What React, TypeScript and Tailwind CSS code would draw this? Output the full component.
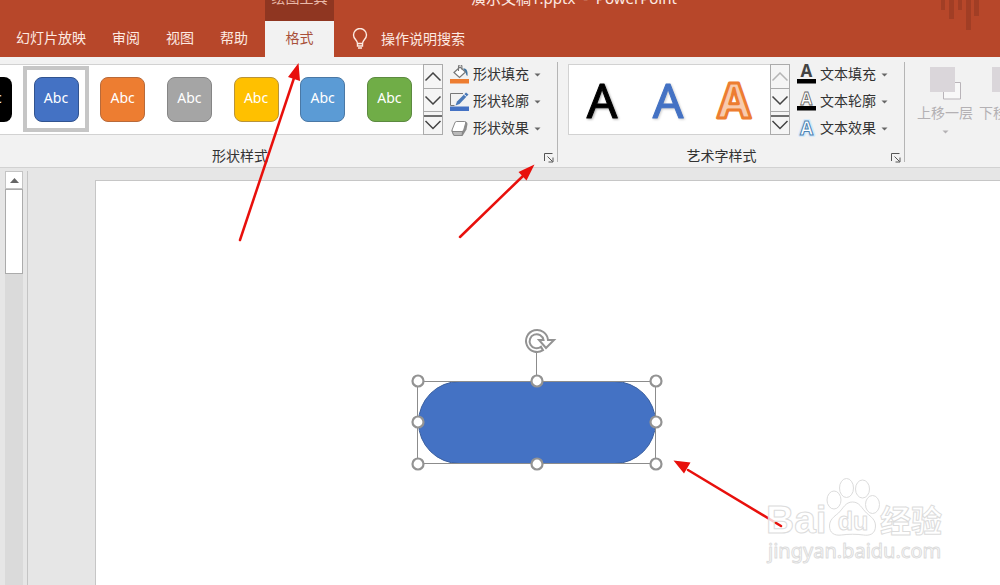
import type { ReactNode } from 'react';
import clsx from 'clsx';

const tabs = ['幻灯片放映', '审阅', '视图', '帮助'];

const shapeStyles = [
  { name: '蓝色', className: 'bg-[#4472c4] border-[#31538f]', selected: true },
  { name: '橙色', className: 'bg-[#ed7d31] border-[#b86a3a]' },
  { name: '灰色', className: 'bg-[#a5a5a5] border-[#858585]' },
  { name: '金色', className: 'bg-[#ffc000] border-[#b8933a]' },
  { name: '浅蓝', className: 'bg-[#5b9bd5] border-[#4a78a5]' },
  { name: '绿色', className: 'bg-[#70ad47] border-[#5c8a40]' },
];

const wordArtStyles = [
  { name: '黑色', className: 'fill-black stroke-black drop-shadow-[1px_1px_1px_#aaa]', width: 1 },
  { name: '蓝色', className: 'fill-[#4472c4] stroke-[#4472c4] drop-shadow-[1px_1px_1px_#ccc]', width: 1 },
  { name: '橙色', className: 'fill-[#f8cbad] stroke-[#ed7d31] font-bold', width: 3 },
];

const handles = [
  [13, 61],
  [132, 61],
  [251, 61],
  [13, 102],
  [251, 102],
  [13, 144],
  [132, 144],
  [251, 144],
];

function Caret({ className }: { className?: string }) {
  return (
    <svg viewBox="0 0 7 4" className={clsx('h-1 w-[7px] shrink-0', className)}>
      <path d="M0.5 0.5h6l-3 3z" fill="currentColor" />
    </svg>
  );
}

function MenuButton({ label, icon }: { label: string; icon: ReactNode }) {
  return (
    <button type="button" className="flex h-[27px] items-center">
      {icon}
      <span className="ml-1 whitespace-nowrap pb-px">{label}</span>
      <Caret className="ml-[5px] mt-px text-[#666]" />
    </button>
  );
}

function GalleryScroller({ upDisabled = false }: { upDisabled?: boolean }) {
  return (
    <div className="flex w-5 flex-col border border-[#ababab] bg-[#f5f5f5] text-[#444]">
      <button
        type="button"
        aria-label="上一行"
        className={clsx(
          'flex h-6 items-center justify-center border-b border-[#ababab]',
          upDisabled && 'text-[#b5b5b5]'
        )}
      >
        <svg viewBox="0 0 18 10" className="h-[10px] w-[18px]">
          <path d="M1.5 8.5L9 1l7.5 7.5" fill="none" stroke="currentColor" strokeWidth="1.5" />
        </svg>
      </button>
      <button
        type="button"
        aria-label="下一行"
        className="flex h-[23px] items-center justify-center border-b border-[#ababab]"
      >
        <svg viewBox="0 0 18 10" className="h-[10px] w-[18px]">
          <path d="M1.5 1.5L9 9l7.5-7.5" fill="none" stroke="currentColor" strokeWidth="1.5" />
        </svg>
      </button>
      <button type="button" aria-label="其他" className="flex flex-1 items-center justify-center">
        <svg viewBox="0 0 18 20" className="h-5 w-[18px]">
          <path d="M0 3h18M1.5 8L9 15.5 16.5 8" fill="none" stroke="currentColor" strokeWidth="1.5" />
        </svg>
      </button>
    </div>
  );
}

function Launcher({ label }: { label: string }) {
  return (
    <button type="button" aria-label={label} className="flex w-5 items-center pl-[6px] pt-[5px]">
      <svg viewBox="0 0 10 10" className="size-[10px]" fill="none" stroke="#555">
        <path d="M0.5 8V0.5H8.5M3.5 3.5l5 5M9 4.5V9H4.5" />
      </svg>
    </button>
  );
}

function FillIcon() {
  return (
    <svg viewBox="0 0 19 20" className="h-5 w-[19px] shrink-0">
      <path d="M4 7.5L10 2l5.5 5-6 5.5z" fill="#fff" stroke="#777" strokeWidth="1.2" />
      <path d="M8.5 6V1.5a1.7 1.7 0 0 1 3.4 0v3" fill="none" stroke="#777" strokeWidth="1.1" />
      <path d="M13 3.5c3.5-.5 5 2 4.5 7.5-1.8-.6-1.5-3-2-4.2z" fill="#44759f" />
      <rect y="14" width="19" height="4.5" fill="#ed7d31" />
    </svg>
  );
}

function OutlineIcon() {
  return (
    <svg viewBox="0 0 19 20" className="h-5 w-[19px] shrink-0">
      <path d="M13 1.5H0.5v12H4.5" fill="none" stroke="#777" />
      <path d="M16 .5l2.5 2L9.5 12l-4 1.5L7 9.5z" fill="#4a79b8" />
      <path d="M14 2.5l2.5 2" stroke="#fff" />
      <rect y="14.5" width="19" height="4.5" fill="#4472c4" />
    </svg>
  );
}

function EffectIcon() {
  return (
    <svg viewBox="0 0 19 20" className="h-5 w-[19px] shrink-0">
      <path d="M6 2.5h9.5q2 .5 2 2.5l-1 5.5-4 6.500H5q-1.500 0-2-1l-1.500-4z" fill="#8b8b8b" />
      <path d="M6.5 2.5h8q1.500 0 1.200 1.500l-2 7q-.5 1.500-1.700 1.500H3Q1.500 12.500 2 11L4.800 4q.5-1.500 1.700-1.500z" fill="#fff" stroke="#8a8a8a" />
      <path d="M2 12l1.5 3.5q.5 1 1.5 1h7l.5-4H3z" fill="#b9b9b9" stroke="#777" strokeWidth=".6" />
    </svg>
  );
}

function LetterIcon({ kind }: { kind: 'fill' | 'outline' | 'effect' }) {
  return (
    <svg viewBox="0 0 19 20" className="h-5 w-[19px] shrink-0 overflow-visible font-bold">
      {kind === 'fill' && (
        <text x="9.5" y="12" textAnchor="middle" fontSize="17" fill="#444">A</text>
      )}
      {kind === 'outline' && (
        <text x="9.5" y="13" textAnchor="middle" fontSize="17" fill="#fff" stroke="#666" strokeWidth=".8">A</text>
      )}
      {kind === 'effect' && (
        <>
          <text x="9.5" y="16" textAnchor="middle" fontSize="19" fill="#d4e9fa" stroke="#d4e9fa" strokeWidth="4" strokeLinejoin="round">A</text>
          <text x="9.5" y="16" textAnchor="middle" fontSize="19" fill="#fff" stroke="#4d83b3">A</text>
        </>
      )}
      {kind !== 'effect' && <rect y="14" width="19" height="4.5" fill="#000" />}
    </svg>
  );
}

function ArrangeButton({ label }: { label: string }) {
  return (
    <button type="button" disabled className="flex w-[62px] shrink-0 flex-col items-center text-[#b4b1b4]">
      <svg viewBox="0 0 31 33" className="h-[33px] w-[31px]">
        <path d="M13.5 15.5h17v16.5h-17z" fill="#f8f8f8" stroke="#b9b4b9" />
        <rect width="25" height="25" fill="#dad6da" />
      </svg>
      <span className="mt-[3px] whitespace-nowrap leading-5">{label}</span>
      <Caret className="mt-[7px]" />
    </button>
  );
}

function Header() {
  return (
    <header className="relative shrink-0 bg-[#b7472a] text-[#fdeae2]">
      <div className="flex h-[21px] overflow-hidden">
        <div className="w-[265px] shrink-0" />
        <div className="w-[69px] shrink-0 bg-[#8f3621] text-center text-[#e9b9a9]">
          <div className="-mt-3 leading-5">绘图工具</div>
        </div>
        <h1 className="-mt-3 ml-[137px] whitespace-pre text-[15px] leading-5">演示文稿1.pptx  -  PowerPoint</h1>
      </div>
      <nav className="flex h-9 items-stretch pl-[3px]">
        {tabs.map((tab) => (
          <button key={tab} type="button" className="shrink-0 px-[13px] pb-[2px]">
            {tab}
          </button>
        ))}
        <button
          type="button"
          aria-current="page"
          className="ml-1 w-[69px] shrink-0 bg-[#f2f2f2] pb-[2px] text-[#a9513a]"
        >
          格式
        </button>
        <button type="button" className="flex items-center pl-[18px]">
          <svg viewBox="0 0 16 22" className="h-[22px] w-4" fill="none" stroke="currentColor" strokeWidth="1.4">
            <path d="M5.5 15.5c0-3.5-4-4-4-8.5a6.5 6.5 0 0 1 13 0c0 4.5-4 5-4 8.5z" />
            <path d="M5.5 15.5v2.5h5v-2.5M6 20h4" />
          </svg>
          <span className="ml-[13px] pb-px">操作说明搜索</span>
        </button>
      </nav>
      <svg viewBox="0 0 40 32" className="absolute right-5 top-0 h-8 w-10" fill="#a13e25">
        <rect x="1" width="4" height="10" />
        <rect x="9" width="5" height="19" />
        <rect x="18" width="4" height="10" />
        <rect x="26" width="5" height="30" />
        <rect x="34" width="5" height="16" />
      </svg>
    </header>
  );
}

function Ribbon() {
  return (
    <div className="flex h-[111px] shrink-0 overflow-hidden border-b border-[#d2d2d2] bg-[#f2f2f2] text-[#333]">
      <section className="flex w-[558px] shrink-0 flex-col">
        <div className="flex h-[87px] items-start pt-1">
          <div className="mt-[3px] flex h-[71px] w-[443px]">
            <div className="flex flex-1 items-center border-y border-[#d2d2d2] bg-white pb-px">
              <div className="flex w-[23px] justify-end overflow-hidden pr-[11px]">
                <button type="button" className="size-[45px] shrink-0 rounded-lg bg-black pb-[3px] text-white">
                  Abc
                </button>
              </div>
              {shapeStyles.map((style) => (
                <div key={style.name} className="flex flex-1">
                  <div
                    className={clsx(
                      'flex size-[66px] items-center justify-center border-4',
                      style.selected ? 'border-[#c6c6c6]' : 'border-transparent'
                    )}
                  >
                    <button
                      type="button"
                      title={style.name}
                      className={clsx('size-[45px] rounded-lg border pb-[3px] text-white', style.className)}
                    >
                      Abc
                    </button>
                  </div>
                </div>
              ))}
            </div>
            <GalleryScroller />
          </div>
          <div className="ml-[7px]">
            <MenuButton label="形状填充" icon={<FillIcon />} />
            <MenuButton label="形状轮廓" icon={<OutlineIcon />} />
            <MenuButton label="形状效果" icon={<EffectIcon />} />
          </div>
        </div>
        <div className="flex h-6 items-center">
          <h2 className="flex-1 pr-[58px] pt-px text-center">形状样式</h2>
          <Launcher label="设置形状格式" />
        </div>
      </section>

      <div className="-ml-px my-[5px] w-px shrink-0 bg-[#b5b5b5]" />

      <section className="flex w-[347px] shrink-0 flex-col">
        <div className="flex h-[87px] items-start pl-[10px] pt-1">
          <div className="mt-[3px] flex h-[71px] w-[222px]">
            <div className="flex flex-1 items-center justify-around border border-r-0 border-[#d2d2d2] bg-white pr-[3px]">
              {wordArtStyles.map((style) => (
                <button key={style.name} type="button" title={style.name}>
                  <svg viewBox="0 0 44 50" className="h-[50px] w-11 text-5xl">
                    <text
                      x="22"
                      y="43"
                      textAnchor="middle"
                      strokeWidth={style.width}
                      strokeLinejoin="round"
                      className={style.className}
                    >
                      A
                    </text>
                  </svg>
                </button>
              ))}
            </div>
            <GalleryScroller upDisabled />
          </div>
          <div className="ml-[7px]">
            <MenuButton label="文本填充" icon={<LetterIcon kind="fill" />} />
            <MenuButton label="文本轮廓" icon={<LetterIcon kind="outline" />} />
            <MenuButton label="文本效果" icon={<LetterIcon kind="effect" />} />
          </div>
        </div>
        <div className="flex h-6 items-center">
          <h2 className="flex-1 pt-px text-center">艺术字样式</h2>
          <Launcher label="设置文本效果格式" />
        </div>
      </section>

      <div className="-ml-px my-[5px] w-px shrink-0 bg-[#b5b5b5]" />

      <section className="flex flex-1 items-start overflow-hidden pl-[9px] pt-[10px]">
        <ArrangeButton label="上移一层" />
        <ArrangeButton label="下移一层" />
      </section>
    </div>
  );
}

function SelectedShape() {
  return (
    <svg viewBox="0 0 264 156" className="absolute left-[309px] top-[139px] h-[156px] w-[264px]">
      <rect x="13.5" y="61.5" width="237" height="82" rx="41" fill="#4472c4" stroke="#3a5f9f" />
      <path d="M12.5 61.5h238v82h-238zM131.5 61V32" fill="none" stroke="#8c8c8c" />
      {handles.map(([cx, cy]) => (
        <circle key={`${cx}-${cy}`} cx={cx} cy={cy} r="5.5" fill="#fff" stroke="#939393" strokeWidth="2.2" />
      ))}
      <path
        transform="translate(132 21)"
        d="M11-1A11 11 0 1 0 6 9.2L4 5.7A7 7 0 1 1 6.5-1H2l7 8 8-8z"
        fill="#fff"
        stroke="#939393"
        strokeWidth="2"
      />
    </svg>
  );
}

function Watermark() {
  return (
    <svg
      viewBox="0 0 190 96"
      className="absolute bottom-[13px] right-[50px] h-24 w-[190px] font-bold"
      fill="#fff"
      fillOpacity=".8"
      stroke="#dcdcdc"
      strokeLinejoin="round"
    >
      <text x="6" y="57" fontSize="39" fontFamily="Liberation Sans, sans-serif">Bai</text>
      <ellipse cx="74" cy="24" rx="7" ry="9" />
      <ellipse cx="86.5" cy="12" rx="7" ry="9.5" />
      <ellipse cx="102.5" cy="13" rx="7" ry="9" />
      <ellipse cx="112.5" cy="28.5" rx="7" ry="9" />
      <path d="M92.5 26c7 0 9 6 14 11 5 4 9 7 9 13 0 8-6 10-12 9-7-1-15-1-22 0-7 1-12-2-12-9 0-6 4-9 9-13 5-5 7-11 14-11z" />
      <text x="93" y="54" fontSize="25" textAnchor="middle" fontFamily="Liberation Sans, sans-serif">du</text>
      <text x="120" y="56" fontSize="31">经验</text>
      <text x="8" y="82" fontSize="20" className="font-normal">jingyan.baidu.com</text>
    </svg>
  );
}

function Annotations() {
  return (
    <svg className="pointer-events-none absolute inset-0 size-full" fill="#e8100c" stroke="#e8100c">
      <g strokeWidth="2.5" strokeLinecap="round">
        <path d="M240 240L294 78M460 237L524 175M781 526L688 470" />
      </g>
      <g stroke="none">
        <path d="M298.5 63L288 77l12 4zM534.5 164.5L518.5 172l8 8.5zM673.5 460.5l17 2-6.5 11z" />
      </g>
    </svg>
  );
}

export default function App() {
  return (
    <div className="relative flex h-screen flex-col overflow-hidden bg-[#e6e6e6] font-['Noto_Sans','Noto_Sans_CJK_SC',sans-serif] text-sm">
      <Header />
      <Ribbon />
      <main className="flex min-h-0 flex-1">
        <div className="mt-[3px] flex w-7 shrink-0 border-r border-[#c4c4c4] pl-[5px]">
          <div className="flex w-[18px] flex-col bg-[#dadada]">
            <button
              type="button"
              aria-label="向上滚动"
              className="flex h-[18px] items-center justify-center border border-[#c4c4c4] bg-white text-[#666]"
            >
              <svg viewBox="0 0 9 5" className="h-[5px] w-[9px]">
                <path d="M0 5h9L4.5 0z" fill="currentColor" />
              </svg>
            </button>
            <div className="h-[85px] border border-[#ababab] bg-white" />
          </div>
        </div>
        <div className="flex min-w-0 flex-1 pl-[67px] pt-3">
          <div className="relative flex-1 overflow-hidden border-l border-t border-[#c6c6c6] bg-white">
            <SelectedShape />
          </div>
        </div>
      </main>
      <Annotations />
      <Watermark />
    </div>
  );
}
